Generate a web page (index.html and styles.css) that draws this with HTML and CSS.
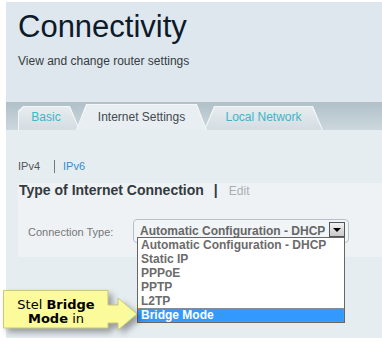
FILE: index.html
```html
<!DOCTYPE html>
<html lang="en">
<head>
  <meta charset="UTF-8">
  <title>Connectivity</title>
  <link rel="stylesheet" href="styles.css">
</head>
<body>
  <div class="page">
    <div class="header">
      <h1>Connectivity</h1>
      <p>View and change router settings</p>
    </div>

    <div class="tabbar">
      <div class="tab tab-first">Basic</div>
      <div class="tab active">Internet Settings</div>
      <div class="tab">Local Network</div>
    </div>

    <div class="content">
      <div class="ip-nav"><span>IPv4</span><a class="ip-link">IPv6</a></div>

      <div class="panel">
        <div class="panel-title">Type of Internet Connection<span class="sep">|</span><span class="edit">Edit</span></div>
        <div class="field">
          <label class="field-label">Connection Type:</label>
          <div class="select">
            Automatic Configuration - DHCP
            <span class="select-btn"></span>
            <ul class="options">
              <li>Automatic Configuration - DHCP</li>
              <li>Static IP</li>
              <li>PPPoE</li>
              <li>PPTP</li>
              <li>L2TP</li>
              <li class="selected">Bridge Mode</li>
            </ul>
          </div>
        </div>
      </div>
    </div>

    <!-- callout over the page -->
    <div class="callout">
      <svg class="callout-shape" width="140" height="44" viewBox="0 0 140 44">
        <path d="M0.5 0.5 H105 V15 H115 V8 L134 24 L115 40 V33 H105 V38 H0.5 Z" fill="#fbfb9c" stroke="#c9c77a" stroke-width="1"/>
      </svg>
      <div class="callout-text">Stel <b>Bridge</b><br><b>Mode</b> in</div>
    </div>
  </div>
</body>
</html>
```

FILE: styles.css
```css
body {
  margin: 0;
  background: #fff;
  font-family: "Liberation Sans", Arial, sans-serif;
}
.page {
  position: relative;
  margin: 2px 0 0 6px;
  height: 336px;
}
.header {
  box-sizing: border-box;
  height: 101px;
  padding: 7px 0 0 12px;
  background: #dee7ed;
  border-bottom: 1px solid #b7c0c5;
}
.header h1 {
  margin: 0;
  font-size: 31px;
  font-weight: normal;
  line-height: 36px;
  color: #0c1a2a;
}
.header p {
  margin: 9px 0 0 0;
  font-size: 12px;
  line-height: 14px;
  color: #353b40;
}

/* tabs */
.tabbar {
  display: flex;
  align-items: flex-end;
  height: 27px;
  padding-left: 12px;
  background: linear-gradient(#b1c1c9, #ccd7dd);
}
.tab {
  position: relative;
  z-index: 0;
  box-sizing: border-box;
  width: 119px;
  height: 24px;
  line-height: 22px;
  font-size: 12px;
  text-align: center;
  color: #3db5c8;
}
.tab::before,
.tab::after {
  content: "";
  position: absolute;
  z-index: -1;
  clip-path: polygon(0 100%, 10px 0, calc(100% - 10px) 0, 100% 100%);
}
.tab::before {
  top: 0;
  left: 0;
  right: 0;
  bottom: 0;
  background: #f4f7f8;
}
.tab::after {
  top: 1px;
  left: 1px;
  right: 1px;
  bottom: 0;
  background: linear-gradient(#e7ecef, #d3dde2);
}
.tab-first {
  width: 62px;
  margin-right: -4px;
  padding-right: 6px;
}
.tab-first::before,
.tab-first::after {
  clip-path: polygon(0 100%, 0 5px, 5px 0, calc(100% - 10px) 0, 100% 100%);
}
.tab.active {
  z-index: 1;
  width: 131px;
  height: 26px;
  padding-top: 2px;
  margin-right: -3px;
  color: #434a50;
}
.tab.active::after {
  background: #e8eef1;
}

/* content */
.content {
  box-sizing: border-box;
  height: 208px;
  padding: 30px 0 0 12px;
  background: #e6edf1;
}
.ip-nav {
  font-size: 11px;
  line-height: 13px;
  color: #555;
}
.ip-link {
  display: inline-block;
  margin-left: 14px;
  padding-left: 8px;
  border-left: 1px solid #777;
  color: #3a8ac8;
}
.panel {
  box-sizing: border-box;
  height: 74px;
  margin-top: 10px;
  background: #eef2f5;
}
.panel-title {
  padding-left: 1px;
  font-size: 14px;
  font-weight: bold;
  line-height: 14px;
  color: #333a40;
}
.sep {
  margin: 0 11px 0 10px;
}
.edit {
  font-size: 12px;
  font-weight: normal;
  color: #a9aeb2;
}
.field {
  display: flex;
  align-items: center;
  margin-top: 21px;
  padding-left: 10px;
}
.field-label {
  width: 105px;
  font-size: 11px;
  color: #777;
  padding-top: 1px;
}
.select {
  position: relative;
  box-sizing: border-box;
  width: 216px;
  height: 24px;
  padding-left: 6px;
  border: 1px solid #b6c2c8;
  border-radius: 4px;
  background: #f2f5f7;
  font-size: 12px;
  font-weight: bold;
  line-height: 22px;
  color: #666;
}
.select-btn {
  position: absolute;
  top: 2px;
  right: 3px;
  box-sizing: border-box;
  width: 16px;
  height: 15px;
  border: 1px solid #555;
  background: linear-gradient(#f2f2f2, #c9c9c9);
}
.select-btn::after {
  content: "";
  position: absolute;
  top: 5px;
  left: 3px;
  border-left: 4px solid transparent;
  border-right: 4px solid transparent;
  border-top: 4px solid #000;
}
.options {
  position: absolute;
  z-index: 2;
  top: 17px;
  left: 3px;
  width: 206px;
  margin: 0;
  padding: 0;
  list-style: none;
  background: #fff;
  border: 1px solid #666;
}
.options li {
  box-sizing: border-box;
  height: 14px;
  padding-left: 3px;
  line-height: 14px;
  color: #6b6b6b;
}
.options li.selected {
  background: #3399ff;
  color: #fff;
  border: 1px dotted #d5812f;
  padding-left: 2px;
  line-height: 12px;
}

/* callout */
.callout {
  position: absolute;
  z-index: 3;
  left: -3px;
  top: 288px;
  width: 140px;
  height: 44px;
}
.callout-shape {
  position: absolute;
  top: 0;
  left: 0;
  filter: drop-shadow(4px 4px 3px rgba(0, 0, 0, 0.35));
}
.callout-text {
  position: relative;
  box-sizing: border-box;
  width: 106px;
  padding-top: 8px;
  font-family: "DejaVu Sans", Verdana, sans-serif;
  font-size: 13px;
  line-height: 14px;
  text-align: center;
  color: #000;
}
```
